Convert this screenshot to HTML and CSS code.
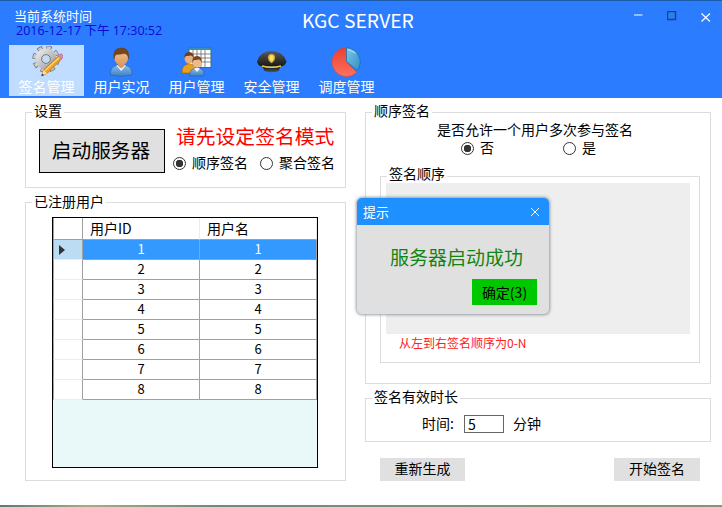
FILE: index.html
```html
<!DOCTYPE html>
<html lang="zh-CN">
<head>
<meta charset="utf-8">
<title>KGC SERVER</title>
<link rel="stylesheet" href="styles.css">
</head>
<body>
<div class="window">
  <header class="header">
    <div class="titlebar">
      <div class="clock">
        <div class="clock-label">当前系统时间</div>
        <div class="clock-time">2016-12-17 下午 17:30:52</div>
      </div>
      <div class="app-title">KGC SERVER</div>
      <div class="controls">
        <svg class="ctl" width="10" height="10" viewBox="0 0 10 10"><path d="M1 4H9.500" stroke="#fff" stroke-width="1"/></svg>
        <svg class="ctl" width="10" height="10" viewBox="0 0 10 10"><rect x=".5" y=".5" width="8" height="8" fill="#2f7fe8" stroke="#0f44a6" stroke-width="1.5"/></svg>
        <svg class="ctl" width="10" height="12" viewBox="0 0 10 12"><path d="M.5 2.500L9 10.500M9 2.500L.5 10.500" stroke="#fff" stroke-width="1.1"/></svg>
      </div>
    </div>
    <nav class="toolbar">
      <div class="tool tool-active">
        <svg class="tool-icon" width="32" height="32" viewBox="0 0 32 32">
          <defs>
            <linearGradient id="gearFill" x1="0" y1="0" x2="1" y2="1"><stop offset="0" stop-color="#e6e6e6"/><stop offset="1" stop-color="#a0a0a0"/></linearGradient>
          </defs>
          <circle cx="15" cy="13" r="11" fill="none" stroke="#777" stroke-width="5.400" stroke-dasharray="5 3.640"/>
          <circle cx="15" cy="13" r="11" fill="none" stroke="#cdcdcd" stroke-width="3.800" stroke-dasharray="3.600 5.040" stroke-dashoffset="-.7"/>
          <circle cx="15" cy="13" r="7.500" fill="none" stroke="url(#gearFill)" stroke-width="6"/>
          <circle cx="15" cy="13" r="4.400" fill="#c6d9f0" stroke="#777" stroke-width="1"/>
          <path d="M10.500 30L12.500 24L27.500 10L30.500 13L16 27.500Z" fill="#f2a21f" stroke="#a8661a" stroke-width=".7"/>
          <path d="M14 24.500L28.500 11.200" stroke="#fbd873" stroke-width="1.200"/>
          <path d="M27.500 10L29 8.300Q30 7.500 31 8.300L31.800 9.300Q32.300 10.300 31.600 11.400L30.500 13Z" fill="#e58bb4" stroke="#9c5c7a" stroke-width=".6"/>
          <path d="M10.500 30L12.500 24L16 27.500Z" fill="#f4dfb5"/>
          <path d="M10.500 30L11.300 27.500L13.200 29.200Z" fill="#333"/>
        </svg>
        <span class="tool-label">签名管理</span>
      </div>
      <div class="tool">
        <svg class="tool-icon" width="32" height="32" viewBox="0 0 32 32">
          <defs>
            <linearGradient id="shirt" x1="0" y1="0" x2="0" y2="1"><stop offset="0" stop-color="#8fc3ee"/><stop offset="1" stop-color="#3f80c4"/></linearGradient>
            <linearGradient id="skin" x1="0" y1="0" x2="0" y2="1"><stop offset="0" stop-color="#f4c79a"/><stop offset="1" stop-color="#d9985f"/></linearGradient>
          </defs>
          <path d="M4.500 29Q4 22 9 20L15 18L21.500 20Q26.500 22 26 29Q15 31.500 4.500 29Z" fill="url(#shirt)" stroke="#2a5f99" stroke-width=".6"/>
          <path d="M10.500 19.500L15.200 25L20 19.500L15.200 18Z" fill="#f2f6fa"/>
          <path d="M12 15H18.500V20L15.200 22.500L12 20Z" fill="#d9985f"/>
          <ellipse cx="15.200" cy="11" rx="7" ry="8.500" fill="url(#skin)"/>
          <path d="M8 13Q6.500 2 15.200 2Q24 2 22.500 13Q22 8 18.500 7.500Q13 8.500 10 8.500Q8.500 10 8 13Z" fill="#7a4518" stroke="#5a3010" stroke-width=".4"/>
        </svg>
        <span class="tool-label">用户实况</span>
      </div>
      <div class="tool">
        <svg class="tool-icon" width="32" height="32" viewBox="0 0 32 32">
          <rect x="8" y="1.500" width="22" height="20" fill="#fff" stroke="#2f6f8f" stroke-width="1"/>
          <path d="M8 1.500H30V4H8Z" fill="#3a8fb0"/>
          <path d="M12 4V21M16 4V21M20 4V21M24 4V21M8 8H30M8 12H30M8 16H30" stroke="#555" stroke-width=".7"/>
          <path d="M1 27Q1 20 4.500 19L8 17.500L12 19Q15 20.500 15 27Z" fill="#e8a020" stroke="#9c6510" stroke-width=".6"/>
          <ellipse cx="8" cy="12" rx="4.500" ry="5.700" fill="#e8b080"/>
          <path d="M3.500 13Q2.500 6 8 6Q13.500 6 12.500 13Q12 9.500 9.500 9.500Q6 10 5 10Q4 11 3.500 13Z" fill="#6e4018"/>
          <path d="M9 30Q8.500 24 12 23L16 21.500L20 23Q23.500 24.500 23 30Z" fill="url(#shirt)" stroke="#2a5f99" stroke-width=".6"/>
          <path d="M13 22.500L16 26L19 22.500L16 21.500Z" fill="#f2f6fa"/>
          <ellipse cx="16" cy="16" rx="4.500" ry="5.500" fill="#eeb98a"/>
          <path d="M11.500 17Q10.500 10 16 10Q21.500 10 20.500 17Q20 13.500 17.500 13.500Q14 14 13 14Q12 15 11.500 17Z" fill="#7a4518"/>
        </svg>
        <span class="tool-label">用户管理</span>
      </div>
      <div class="tool">
        <svg class="tool-icon" width="32" height="32" viewBox="0 0 32 32">
          <defs>
            <linearGradient id="cap" x1="0" y1="0" x2="0" y2="1"><stop offset="0" stop-color="#5a5a5a"/><stop offset="1" stop-color="#161616"/></linearGradient>
            <linearGradient id="visor" x1="0" y1="0" x2="0" y2="1"><stop offset="0" stop-color="#111"/><stop offset="1" stop-color="#555"/></linearGradient>
          </defs>
          <path d="M1 15.500Q4 5 15.500 5Q27 5 30.500 15.500Q29 20 25 20.500H6Q2 20 1 15.500Z" fill="url(#cap)"/>
          <path d="M6.500 20.500Q15.500 23 24.500 20.500L22.500 25Q15.500 27.500 8.500 25Z" fill="url(#visor)"/>
          <path d="M6 20Q15.500 22.500 25 20" fill="none" stroke="#f0d040" stroke-width="1.400"/>
          <path d="M15.500 8Q18.500 8 19 11Q19 15 15.500 17Q12 15 12 11Q12.500 8 15.500 8Z" fill="#e8c040" stroke="#a58420" stroke-width=".5"/>
          <ellipse cx="15.500" cy="12" rx="1.800" ry="2.800" fill="#f8e070"/>
        </svg>
        <span class="tool-label">安全管理</span>
      </div>
      <div class="tool">
        <svg class="tool-icon" width="32" height="32" viewBox="0 0 32 32">
          <defs>
            <linearGradient id="pieRed" x1="0" y1="0" x2="0" y2="1"><stop offset="0" stop-color="#e8402e"/><stop offset="1" stop-color="#ff7060"/></linearGradient>
            <linearGradient id="pieBlue" x1="0" y1="0" x2="1" y2="1"><stop offset="0" stop-color="#7cc6ea"/><stop offset="1" stop-color="#2e8fc8"/></linearGradient>
          </defs>
          <path d="M15.500 16L25.700 26.300A14.500 14.500 0 1 1 15.500 1.500Z" fill="url(#pieRed)" stroke="#c94a3c" stroke-width=".6"/>
          <path d="M15.500 15.500V1.700A14.500 14.500 0 0 1 26.500 24.500Z" fill="url(#pieBlue)" stroke="#1f6fa8" stroke-width=".8"/>
          <path d="M17 3.500L24.500 7" stroke="#d8f0fb" stroke-width=".8" fill="none"/>
        </svg>
        <span class="tool-label">调度管理</span>
      </div>
    </nav>
  </header>

  <main class="content">
    <div class="column column-left">
      <fieldset class="group group-settings">
        <legend class="group-title">设置</legend>
        <div class="settings-row">
          <button class="start-server" type="button">启动服务器</button>
          <div class="settings-side">
            <div class="notice">请先设定签名模式</div>
            <div class="mode-options">
              <label class="option"><input class="radio" type="radio" name="mode" checked><span class="option-text">顺序签名</span></label>
              <label class="option"><input class="radio" type="radio" name="mode"><span class="option-text">聚合签名</span></label>
            </div>
          </div>
        </div>
      </fieldset>
      <fieldset class="group group-users">
        <legend class="group-title">已注册用户</legend>
        <div class="grid-box">
          <table class="grid">
            <thead>
              <tr><th class="corner"></th><th class="col-head">用户ID</th><th class="col-head">用户名</th></tr>
            </thead>
            <tbody>
              <tr class="selected"><td class="row-head"><span class="arrow"></span></td><td>1</td><td>1</td></tr>
              <tr><td class="row-head"></td><td>2</td><td>2</td></tr>
              <tr><td class="row-head"></td><td>3</td><td>3</td></tr>
              <tr><td class="row-head"></td><td>4</td><td>4</td></tr>
              <tr><td class="row-head"></td><td>5</td><td>5</td></tr>
              <tr><td class="row-head"></td><td>6</td><td>6</td></tr>
              <tr><td class="row-head"></td><td>7</td><td>7</td></tr>
              <tr><td class="row-head"></td><td>8</td><td>8</td></tr>
            </tbody>
          </table>
        </div>
      </fieldset>
    </div>

    <div class="column column-right">
      <fieldset class="group group-seq">
        <legend class="group-title">顺序签名</legend>
        <div class="question">是否允许一个用户多次参与签名</div>
        <div class="answer-options">
          <label class="option option-no"><input class="radio" type="radio" name="multi" checked><span class="option-text">否</span></label>
          <label class="option"><input class="radio" type="radio" name="multi"><span class="option-text">是</span></label>
        </div>
        <fieldset class="group group-order">
          <legend class="group-title">签名顺序</legend>
          <div class="order-canvas"></div>
          <div class="order-hint">从左到右签名顺序为0-N</div>
        </fieldset>
      </fieldset>
      <fieldset class="group group-time">
        <legend class="group-title">签名有效时长</legend>
        <div class="time-row">
          <span class="time-label">时间:</span>
          <input class="time-input" type="text" value="5">
          <span class="time-unit">分钟</span>
        </div>
      </fieldset>
      <div class="actions">
        <button class="action" type="button">重新生成</button>
        <button class="action action-start" type="button">开始签名</button>
      </div>
    </div>
  </main>
  <div class="desktop-edge"></div>

  <div class="dialog">
    <div class="dialog-head">
      <span>提示</span>
      <svg width="10" height="10" viewBox="0 0 10 10"><path d="M1 1L9 9M9 1L1 9" stroke="#fff" stroke-width="1"/></svg>
    </div>
    <div class="dialog-body">
      <div class="dialog-message">服务器启动成功</div>
      <button class="dialog-ok" type="button">确定(3)</button>
    </div>
  </div>
</div>
</body>
</html>
```

FILE: styles.css
```css
* { box-sizing: border-box; }

html, body {
  margin: 0;
  padding: 0;
  background: #fff;
}

body {
  width: 722px;
  height: 507px;
  overflow: hidden;
  font-family: "Noto Sans CJK SC", "Liberation Sans", sans-serif;
  font-size: 14px;
  line-height: 14px;
  color: #000;
}

.window {
  position: relative;
  display: flex;
  flex-direction: column;
  width: 722px;
  height: 507px;
}

/* header */
.header {
  height: 98px;
  background: #2b7cfe;
  border-top: 1px solid #1d5ca8;
  color: #fff;
}

.titlebar {
  display: grid;
  grid-template-columns: 302px auto 1fr;
  height: 44px;
}

.clock {
  padding: 7px 0 0 14px;
}

.clock-label {
  font-size: 13px;
  line-height: 16px;
}

.clock-time {
  margin: 0 0 0 2px;
  font-family: "Open Sans", "Noto Sans CJK SC", sans-serif;
  font-size: 12.500px;
  line-height: 14px;
  color: #0a0ad2;
  white-space: nowrap;
}

.app-title {
  padding-top: 9px;
  font-size: 19.300px;
  line-height: 20px;
  white-space: nowrap;
}

.controls {
  display: flex;
  justify-content: flex-end;
  gap: 24px;
  padding: 10px 11px 0 0;
}

.ctl {
  display: block;
}

.toolbar {
  display: flex;
  padding-left: 9px;
}

.tool {
  display: flex;
  flex-direction: column;
  align-items: center;
  width: 75px;
  height: 51px;
  padding-top: 1px;
}

.tool-active {
  background: #c0dcff;
}

.tool-icon {
  display: block;
  flex: none;
}

.tool-label {
  font-size: 14px;
  line-height: 16px;
  color: #fff;
  white-space: nowrap;
}

/* content */
.content {
  flex: 1;
  display: flex;
  gap: 19px;
  padding: 7px 0 0 25px;
  background: #fff;
}

.column {
  display: flex;
  flex-direction: column;
  gap: 7px;
}

.column-left { width: 321px; }
.column-right { width: 346px; }

.group {
  margin: 0;
  padding: 0;
  min-width: 0;
  border: 1px solid #dcdcdc;
}

.group-title {
  margin-left: 6px;
  padding: 0 2px 4px;
  font-size: 14px;
  line-height: 10px;
}

.group-users > .group-title {
  padding-bottom: 2px;
  line-height: 12px;
}

.group-order > .group-title {
  padding-bottom: 6px;
  line-height: 8px;
}

.group-settings { height: 83px; }
.group-users { height: 286px; }
.group-seq { height: 279px; }
.group-time { height: 51px; }

/* settings */
.settings-row {
  display: flex;
  padding: 4px 0 0 13px;
}

.start-server {
  width: 126px;
  height: 44px;
  margin-top: 6px;
  padding: 0 2px 2px 0;
  border: 1px solid #000;
  background: #e0e0e0;
  color: #000;
  font: inherit;
  font-size: 19.700px;
  line-height: 24px;
}

.settings-side {
  display: flex;
  flex-direction: column;
  margin-left: 8px;
}

.notice {
  padding: 0 0 2px 3px;
  font-size: 19.800px;
  line-height: 25px;
  color: #f00;
  white-space: nowrap;
}

.mode-options {
  display: flex;
  gap: 12px;
  margin-top: 3px;
  height: 20px;
  align-items: center;
}

.option {
  display: flex;
  align-items: center;
  gap: 6px;
  white-space: nowrap;
}

.option-text {
  padding-bottom: 2px;
}

.radio {
  appearance: none;
  display: block;
  width: 13px;
  height: 13px;
  margin: 0;
  border: 1px solid #333;
  border-radius: 50%;
  background: #fff;
  flex: none;
}

.radio:checked {
  background: radial-gradient(circle, #333 0 3.500px, #fff 4px);
}

/* grid */
.grid-box {
  width: 266px;
  height: 251px;
  margin: 8px 0 0 26px;
  border: 1px solid #000;
  background: #e9f8f9;
}

.grid {
  width: 264px;
  border-collapse: separate;
  border-spacing: 0;
  table-layout: fixed;
  font-size: 13px;
}

.grid th,
.grid td {
  padding: 0;
  font-weight: 400;
}

.corner {
  width: 30px;
  height: 22px;
  background: #fff;
  border-right: 1px solid #a0a0a0;
  border-bottom: 1px solid #a0a0a0;
  border-left: 1px solid #a0a0a0;
}

.grid .col-head {
  width: 117px;
  height: 22px;
  padding: 0 0 2px 7px;
  font-size: 14px;
  text-align: left;
  background: #fff;
  border-right: 1px solid #ececec;
  border-bottom: 1px solid #a0a0a0;
}

.grid td {
  height: 20px;
  padding-bottom: 2px;
  line-height: 14px;
  text-align: center;
  background: #fff;
  border-right: 1px solid #a0a0a0;
  border-bottom: 1px solid #a0a0a0;
}

.grid .row-head {
  padding: 0;
  background: #fff;
  border-left: 1px solid #a0a0a0;
  border-right: 1px solid #a0a0a0;
  border-bottom: 1px solid #ececec;
}

.grid .selected td {
  background: #3399ff;
  color: #fff;
}

.grid .selected .row-head {
  background: #bcdcf4;
}

.arrow {
  display: block;
  width: 0;
  height: 0;
  margin-left: 5px;
  border-top: 5px solid transparent;
  border-bottom: 5px solid transparent;
  border-left: 6px solid #333;
}

/* sequence */
.question {
  margin-top: 2px;
  padding-left: 71px;
  white-space: nowrap;
  line-height: 16px;
}

.answer-options {
  display: flex;
  padding-left: 95px;
  margin-top: 3px;
  height: 16px;
  align-items: center;
}

.option-no {
  width: 102px;
}

.group-order {
  width: 320px;
  height: 194px;
  margin: 13px 0 0 14px;
}

.order-canvas {
  width: 304px;
  height: 151px;
  margin: 0 0 0 5px;
  background: #eee;
}

.order-hint {
  padding: 2px 0 0 18px;
  font-size: 12px;
  line-height: 14px;
  color: #ff2020;
  white-space: nowrap;
}

/* time */
.time-row {
  display: flex;
  align-items: center;
  height: 18px;
  margin-top: 10px;
  padding-left: 56px;
}

.time-label,
.time-unit {
  padding-bottom: 2px;
}

.time-label {
  width: 42px;
}

.time-input {
  width: 40px;
  height: 18px;
  margin-right: 9px;
  padding: 0 0 1px 3px;
  border: 1px solid #666;
  border-radius: 0;
  background: #fff;
  color: #000;
  font: inherit;
  outline: none;
}

/* actions */
.actions {
  display: flex;
  justify-content: space-between;
  width: 320px;
  margin: 9px 0 0 15px;
}

.action {
  width: 85px;
  height: 23px;
  padding: 0 0 3px;
  border: 0;
  background: #e0e0e0;
  color: #000;
  font: inherit;
}

.action-start {
  width: 86px;
}

.desktop-edge {
  height: 2px;
  background: linear-gradient(90deg, #5b7a70 0, #a8ab84 12%, #6f8a7c 30%, #7f8f78 60%, #8a9278 100%);
}

/* dialog */
.dialog {
  position: absolute;
  left: 357px;
  top: 198px;
  width: 192px;
  height: 116px;
  border-radius: 5px;
  overflow: hidden;
  background: #e0e0e0;
  box-shadow: 0 0 3px 1px rgba(70, 85, 100, .55);
}

.dialog-head {
  display: flex;
  align-items: center;
  justify-content: space-between;
  height: 27px;
  padding: 0 9px 0 6px;
  background: #1e90ff;
  color: #fff;
  font-size: 13px;
}

.dialog-body {
  display: flex;
  flex-direction: column;
  align-items: flex-end;
}

.dialog-message {
  align-self: flex-start;
  margin: 20px 0 0 33px;
  font-size: 19px;
  line-height: 24px;
  color: #118511;
  white-space: nowrap;
}

.dialog-ok {
  width: 65px;
  height: 26px;
  margin: 10px 12px 0 0;
  padding: 0 0 1px;
  border: 0;
  background: #00c800;
  color: #000;
  font: inherit;
  font-size: 14px;
}
```
